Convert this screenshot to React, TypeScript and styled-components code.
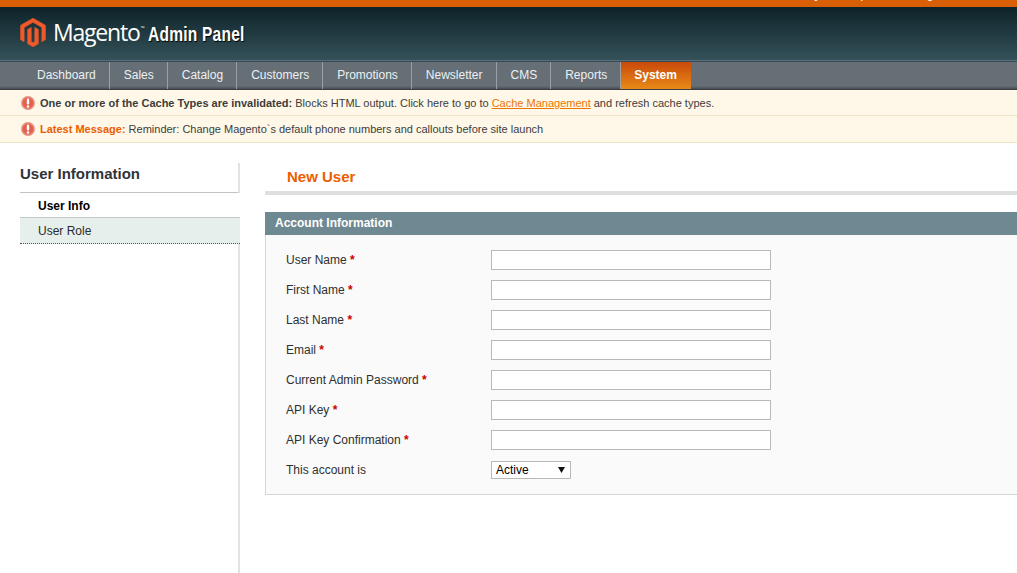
import React from "react";
import styled, { createGlobalStyle } from "styled-components";

const Global = createGlobalStyle`
  html, body { margin: 0; padding: 0; height: 100%; background: #fff; overflow: hidden; }
  body { font-family: "Liberation Sans", Arial, sans-serif; font-size: 12px; color: #2f2f2f; }
  #root { height: 100%; }
`;

const Page = styled.div`
  display: flex;
  flex-direction: column;
  height: 573px;
  overflow: hidden;
`;

const TopStrip = styled.div`
  height: 7px;
  flex: none;
  background: #d95f07;
  overflow: hidden;
  display: flex;
  align-items: flex-start;
  justify-content: flex-end;
  padding-right: 61px;
  color: #fff;
  font-size: 12px;
  line-height: 14px;
`;

const TopWord = styled.span<{ $gap: number }>`
  flex: none;
  height: 14px;
  margin-top: -13px;
  margin-left: ${(p) => p.$gap}px;
`;

const Masthead = styled.header`
  height: 53px;
  flex: none;
  box-sizing: border-box;
  padding: 10px 0 0 20px;
  display: flex;
  align-items: flex-start;
  background: linear-gradient(#0e2329, #345159);
`;

const LogoMark = styled.svg`
  width: 26px;
  height: 31px;
  flex: none;
`;

const Wordmark = styled.span`
  font-family: "Open Sans", sans-serif;
  font-size: 23px;
  line-height: 30px;
  letter-spacing: -1.2px;
  color: #fff;
  margin-left: 7px;
`;

const Tm = styled.span`
  position: relative;
  top: -11px;
  font-size: 5px;
  line-height: 0;
  letter-spacing: 0;
  margin-left: 1px;
`;

const Product = styled.span`
  display: block;
  width: 97px;
  font-weight: 700;
  font-size: 21px;
  line-height: 28px;
  margin-top: 3px;
  letter-spacing: 0.3px;
  white-space: nowrap;
  color: #fff;
  margin-left: 4px;
  text-shadow: 1px 1px 1px #000;
  transform: scaleX(0.74);
  transform-origin: left center;
`;

const Nav = styled.nav`
  height: 30px;
  flex: none;
  box-sizing: border-box;
  display: flex;
  padding-left: 23px;
  background: linear-gradient(#666e76 0, #666e76 25px, #3e4246 29px);
  border-top: 1px solid #557079;
  border-bottom: 1px solid #3a3e42;
  box-shadow: inset 0 1px 0 #384b52;
`;

const NavItem = styled.a<{ $active?: boolean }>`
  display: block;
  box-sizing: border-box;
  height: 27px;
  margin-top: 1px;
  padding: 0 13px 0 14px;
  font-size: 12px;
  line-height: 26px;
  color: ${(p) => (p.$active ? "#fff" : "#ecf1f3")};
  font-weight: ${(p) => (p.$active ? 700 : 400)};
  border-right: ${(p) => (p.$active ? "0" : "1px solid #9aa1a6")};
  background: ${(p) => (p.$active ? "linear-gradient(#c9490a, #e88a18)" : "none")};
  padding-left: ${(p) => (p.$active ? "13px" : "14px")};
  width: ${(p) => (p.$active ? "70px" : "auto")};
`;

const Notice = styled.div<{ $h: number }>`
  height: ${(p) => p.$h}px;
  flex: none;
  box-sizing: border-box;
  display: flex;
  align-items: center;
  padding-left: 21px;
  font-size: 11px;
  background: #fff8e8;
  border-bottom: 1px solid #ece2c4;
  color: #3c3c3c;
`;

const NoticeIcon = styled.svg`
  width: 14px;
  height: 14px;
  margin-right: 5px;
  flex: none;
`;

const Strong = styled.b`
  margin-right: 3px;
`;

const Latest = styled.b`
  color: #eb5e00;
  margin-right: 3px;
`;

const NoticeLink = styled.a`
  color: #ea7601;
  text-decoration: underline;
  margin: 0 3px;
`;

const Body = styled.div`
  flex: 1;
  display: flex;
  padding-top: 20px;
  min-height: 0;
`;

const Sidebar = styled.aside`
  width: 220px;
  flex: none;
  margin-left: 20px;
  margin-right: 25px;
  box-sizing: border-box;
  border-right: 2px solid #e2e2e2;
`;

const SideTitle = styled.h3`
  margin: 0;
  height: 30px;
  box-sizing: border-box;
  border-bottom: 1px solid #c3c3c3;
  font-size: 15px;
  line-height: 21px;
  font-weight: 700;
  color: #2f3338;
`;

const SideItem = styled.a<{ $active?: boolean }>`
  display: block;
  box-sizing: border-box;
  margin-right: -2px;
  padding-left: 18px;
  font-size: 12px;
  color: ${(p) => (p.$active ? "#000" : "#2b2b2b")};
  font-weight: ${(p) => (p.$active ? 700 : 400)};
  height: ${(p) => (p.$active ? "24px" : "27px")};
  line-height: 27px;
  background: ${(p) => (p.$active ? "#fff" : "#e7efed")};
  border-top: ${(p) => (p.$active ? "0" : "1px solid #bfc7c7")};
  border-bottom: ${(p) => (p.$active ? "0" : "1px dotted #555")};
`;

const Main = styled.main`
  flex: 1;
  min-width: 0;
`;

const PageHead = styled.div`
  height: 32px;
  box-sizing: border-box;
  border-bottom: 4px solid #dfdfdf;
  padding: 5px 0 0 22px;
  margin-bottom: 17px;
`;

const PageTitle = styled.h3`
  margin: 0;
  font-size: 15px;
  line-height: 18px;
  font-weight: 700;
  color: #eb5e00;
`;

const SectionHead = styled.h4`
  margin: 0;
  height: 23px;
  box-sizing: border-box;
  padding-left: 10px;
  background: #6f8992;
  color: #fff;
  font-size: 12px;
  line-height: 23px;
  font-weight: 700;
`;

const Fieldset = styled.div`
  box-sizing: border-box;
  height: 260px;
  padding: 15px 0 0 20px;
  background: #fafafa;
  border-left: 1px solid #d6d6d6;
  border-bottom: 1px solid #d6d6d6;
`;

const Row = styled.div`
  display: flex;
  align-items: center;
  height: 20px;
  margin-bottom: 10px;
`;

const Label = styled.label`
  width: 205px;
  flex: none;
  font-size: 12px;
  color: #2f2f2f;
`;

const Req = styled.span`
  color: #c00;
  font-weight: 700;
`;

const TextInput = styled.input`
  box-sizing: border-box;
  width: 280px;
  height: 20px;
  margin: 0;
  padding: 2px;
  background: #fff;
  border: 1px solid #b9b9b9;
  border-radius: 0;
  outline: none;
  font: 12px "Liberation Sans", Arial, sans-serif;
`;

const Select = styled.select`
  box-sizing: border-box;
  width: 80px;
  height: 18px;
  margin: 0;
  padding: 0 0 0 4px;
  appearance: none;
  background: #fff url("data:image/svg+xml,%3Csvg xmlns='http://www.w3.org/2000/svg' width='7' height='6'%3E%3Cpath d='M0 0H7L3.5 6Z' fill='%23111'/%3E%3C/svg%3E") no-repeat 66px 5px;
  border: 1px solid #b9b9b9;
  border-radius: 0;
  color: #000;
  font: 12px "Liberation Sans", Arial, sans-serif;
`;

const nav = ["Dashboard", "Sales", "Catalog", "Customers", "Promotions", "Newsletter", "CMS", "Reports"];
const fields = ["User Name", "First Name", "Last Name", "Email", "Current Admin Password", "API Key", "API Key Confirmation"];

const AlertIcon = ({ id }: { id: string }) => (
  <NoticeIcon viewBox="0 0 14 14">
    <defs>
      <radialGradient id={id} cx="50%" cy="50%" r="50%">
        <stop offset="0%" stopColor="#e2604e" />
        <stop offset="70%" stopColor="#e4604f" />
        <stop offset="100%" stopColor="#f2a493" />
      </radialGradient>
    </defs>
    <circle cx="7" cy="7" r="6.7" fill={`url(#${id})`} stroke="#d9907f" strokeWidth="0.6" />
    <rect x="5.8" y="2.6" width="2.4" height="6" rx="1.1" fill="#fff" />
    <circle cx="7" cy="10.6" r="1.25" fill="#fff" />
  </NoticeIcon>
);

export default function App() {
  return (
    <Page>
      <Global />
      <TopStrip>
        <TopWord $gap={0}>Today</TopWord>
        <TopWord $gap={22}>Help</TopWord>
        <TopWord $gap={46}>Log Out</TopWord>
      </TopStrip>
      <Masthead>
        <LogoMark viewBox="1.1 -0.5 21.8 25">
          <path
            fill="#f1592a"
            stroke="#f1592a"
            strokeWidth="0.5"
            d="M12 24l-4.455-2.572v-12l2.97-1.715v12.001L12 20.57l1.485-.856V7.713l2.97 1.715v12L12 24zM22.391 6v12l-2.97 1.714V7.713L12 3.43 4.579 7.713v12.001L1.609 18V6L12 0l10.391 6z"
          />
        </LogoMark>
        <Wordmark>Magento<Tm>™</Tm></Wordmark>
        <Product>Admin Panel</Product>
      </Masthead>
      <Nav>
        {nav.map((n) => <NavItem key={n}>{n}</NavItem>)}
        <NavItem $active>System</NavItem>
      </Nav>
      <Notice $h={26}>
        <AlertIcon id="alert-a" />
        <Strong>One or more of the Cache Types are invalidated:</Strong>
        Blocks HTML output. Click here to go to
        <NoticeLink>Cache Management</NoticeLink>
        and refresh cache types.
      </Notice>
      <Notice $h={27}>
        <AlertIcon id="alert-b" />
        <Latest>Latest Message:</Latest>
        Reminder: Change Magento`s default phone numbers and callouts before site launch
      </Notice>
      <Body>
        <Sidebar>
          <SideTitle>User Information</SideTitle>
          <SideItem $active>User Info</SideItem>
          <SideItem>User Role</SideItem>
        </Sidebar>
        <Main>
          <PageHead><PageTitle>New User</PageTitle></PageHead>
          <SectionHead>Account Information</SectionHead>
          <Fieldset>
            {fields.map((f) => (
              <Row key={f}>
                <Label>{f} <Req>*</Req></Label>
                <TextInput type="text" />
              </Row>
            ))}
            <Row>
              <Label>This account is</Label>
              <Select defaultValue="Active">
                <option>Active</option>
                <option>Inactive</option>
              </Select>
            </Row>
          </Fieldset>
        </Main>
      </Body>
    </Page>
  );
}
